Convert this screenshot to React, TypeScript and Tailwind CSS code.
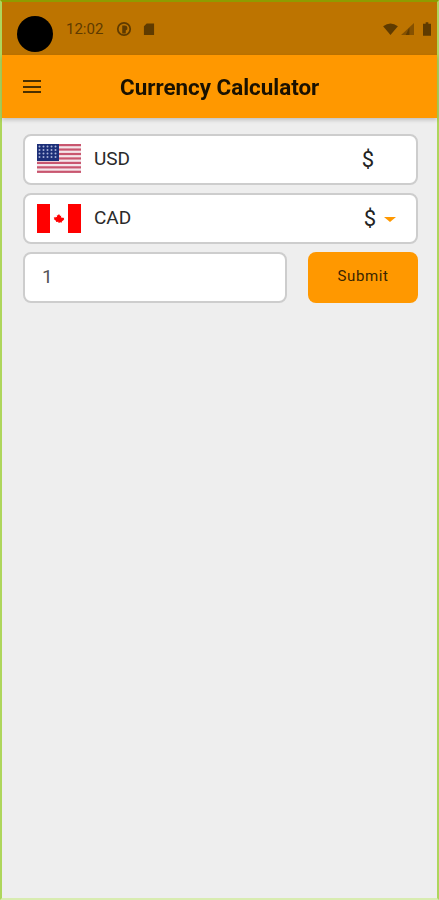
import React from "react";

const UsFlag = () => (
  <svg width="44" height="29" viewBox="0 0 44 29" className="mb-[2px] shrink-0">
    <rect width="44" height="29" fill="#f4e6ea" />
    {[0, 1, 2, 3, 4, 5, 6].map((i) => (
      <rect key={i} y={i * 4.45} width="44" height="2.2" fill="#c9566f" />
    ))}
    <rect width="22" height="17" fill="#1c2f78" />
    {[2.5, 6, 9.5, 13].map((y) =>
      [2.5, 6.5, 10.5, 14.5, 18.5].map((x) => (
        <circle key={`${x}-${y}`} cx={x} cy={y} r="1" fill="#aab4d8" />
      ))
    )}
  </svg>
);

const CaFlag = () => (
  <svg width="44" height="29" viewBox="0 0 44 29" className="shrink-0">
    <rect width="44" height="29" fill="#ffffff" />
    <rect width="13" height="29" fill="#ff0000" />
    <rect x="31" width="13" height="29" fill="#ff0000" />
    <path
      d="M22 10l1.200 2 1-.4-.3 2.200 1.300-.6.300.8 1.700-.2-.5 1.400.6.400-2.500 1.900.2 1-2.500-.3V19h-1v-1.300l-2.500.3.200-1-2.500-1.900.6-.4-.5-1.400 1.700.2.300-.8 1.300.6-.3-2.200 1 .4z"
      fill="#ff0000"
    />
  </svg>
);

const CurrencyRow = ({ flag, code, caret }: { flag: React.ReactNode; code: string; caret?: boolean }) => (
  <div className="flex h-[51px] items-center rounded-lg border-2 border-[#cdcdcd] bg-white pl-[12px]">
    {flag}
    <span className="ml-[13px] text-[19px] text-[#2a2a2a]">{code}</span>
    {caret ? (
      <div className="ml-auto flex items-center pr-[20px]">
        <span className="text-[22px] text-[#222]">$</span>
        <span className="ml-[8px] mt-[1px] h-0 w-0 border-x-[6px] border-t-[5px] border-x-transparent border-t-[#ff9800]" />
      </div>
    ) : (
      <span className="ml-auto pr-[42px] text-[22px] text-[#222]">$</span>
    )}
  </div>
);

export default function App() {
  return (
    <div
      className="flex h-[900px] w-full flex-col border-x-2 border-b-2 border-t-2 border-x-[#aed65c] border-b-[#d8ecb0] border-t-[#8f9c00] bg-[#eeeeee] blur-[0.5px]"
      style={{ fontFamily: "Roboto, sans-serif" }}
    >
      <div className="flex h-[53px] items-center bg-[#bd7400] pl-[15px] pr-[6px] text-[#5f3b00]">
        <div className="mt-[11px] h-9 w-9 rounded-full bg-black" />
        <span className="ml-[13px] mt-[2px] text-[15px]">12:02</span>
        <svg width="16" height="16" viewBox="0 0 18 18" className="ml-[13px]">
          <circle cx="9" cy="9" r="7" fill="none" stroke="currentColor" strokeWidth="2" />
          <path d="M7 5h3a3 3 0 0 1 1 5.800V14H7z" fill="currentColor" />
        </svg>
        <svg width="12" height="14" viewBox="0 0 13 14" className="ml-[11px]">
          <path d="M4 1h8v12.500H1V4z" fill="currentColor" />
        </svg>
        <div className="ml-auto flex items-center">
          <svg width="15" height="12" viewBox="0 0 16 13">
            <path d="M0 3.500Q8-2.500 16 3.500L8 13z" fill="currentColor" />
          </svg>
          <svg width="14" height="12" viewBox="0 0 15 13" className="ml-[3px]">
            <path d="M14 0v13H0z" fill="currentColor" opacity="0.6" />
            <path d="M9 5v8H5z" fill="currentColor" />
          </svg>
          <svg width="8" height="14" viewBox="0 0 9 15" className="ml-[8px]">
            <path d="M3 0h3v1.500h3V15H0V1.500h3z" fill="currentColor" />
          </svg>
        </div>
      </div>

      <div className="relative flex h-[63px] items-center bg-[#ff9800] pl-[21px] shadow-[0_2px_4px_rgba(0,0,0,0.2)]">
        <div className="flex w-[18px] flex-col gap-[3.500px]">
          <div className="h-[2px] bg-[#4a3000]" />
          <div className="h-[2px] bg-[#4a3000]" />
          <div className="h-[2px] bg-[#4a3000]" />
        </div>
        <h1 className="ml-[79px] mt-[2px] text-[22.400px] font-bold text-[#1a1100]">Currency Calculator</h1>
      </div>

      <div className="flex flex-col gap-[8px] pl-[21px] pr-[19px] pt-[16px]">
        <CurrencyRow flag={<UsFlag />} code="USD" />
        <CurrencyRow flag={<CaFlag />} code="CAD" caret />
        <div className="flex gap-[21px]">
          <div className="flex h-[51px] flex-1 items-center rounded-lg border-2 border-[#cdcdcd] bg-white pl-[17px] text-[19px] text-[#555]">
            1
          </div>
          <button className="h-[51px] w-[110px] rounded-lg bg-[#ff9800] pb-[2px] text-[15px] tracking-[0.6px] text-[#3a2500]">
            Submit
          </button>
        </div>
      </div>
    </div>
  );
}
